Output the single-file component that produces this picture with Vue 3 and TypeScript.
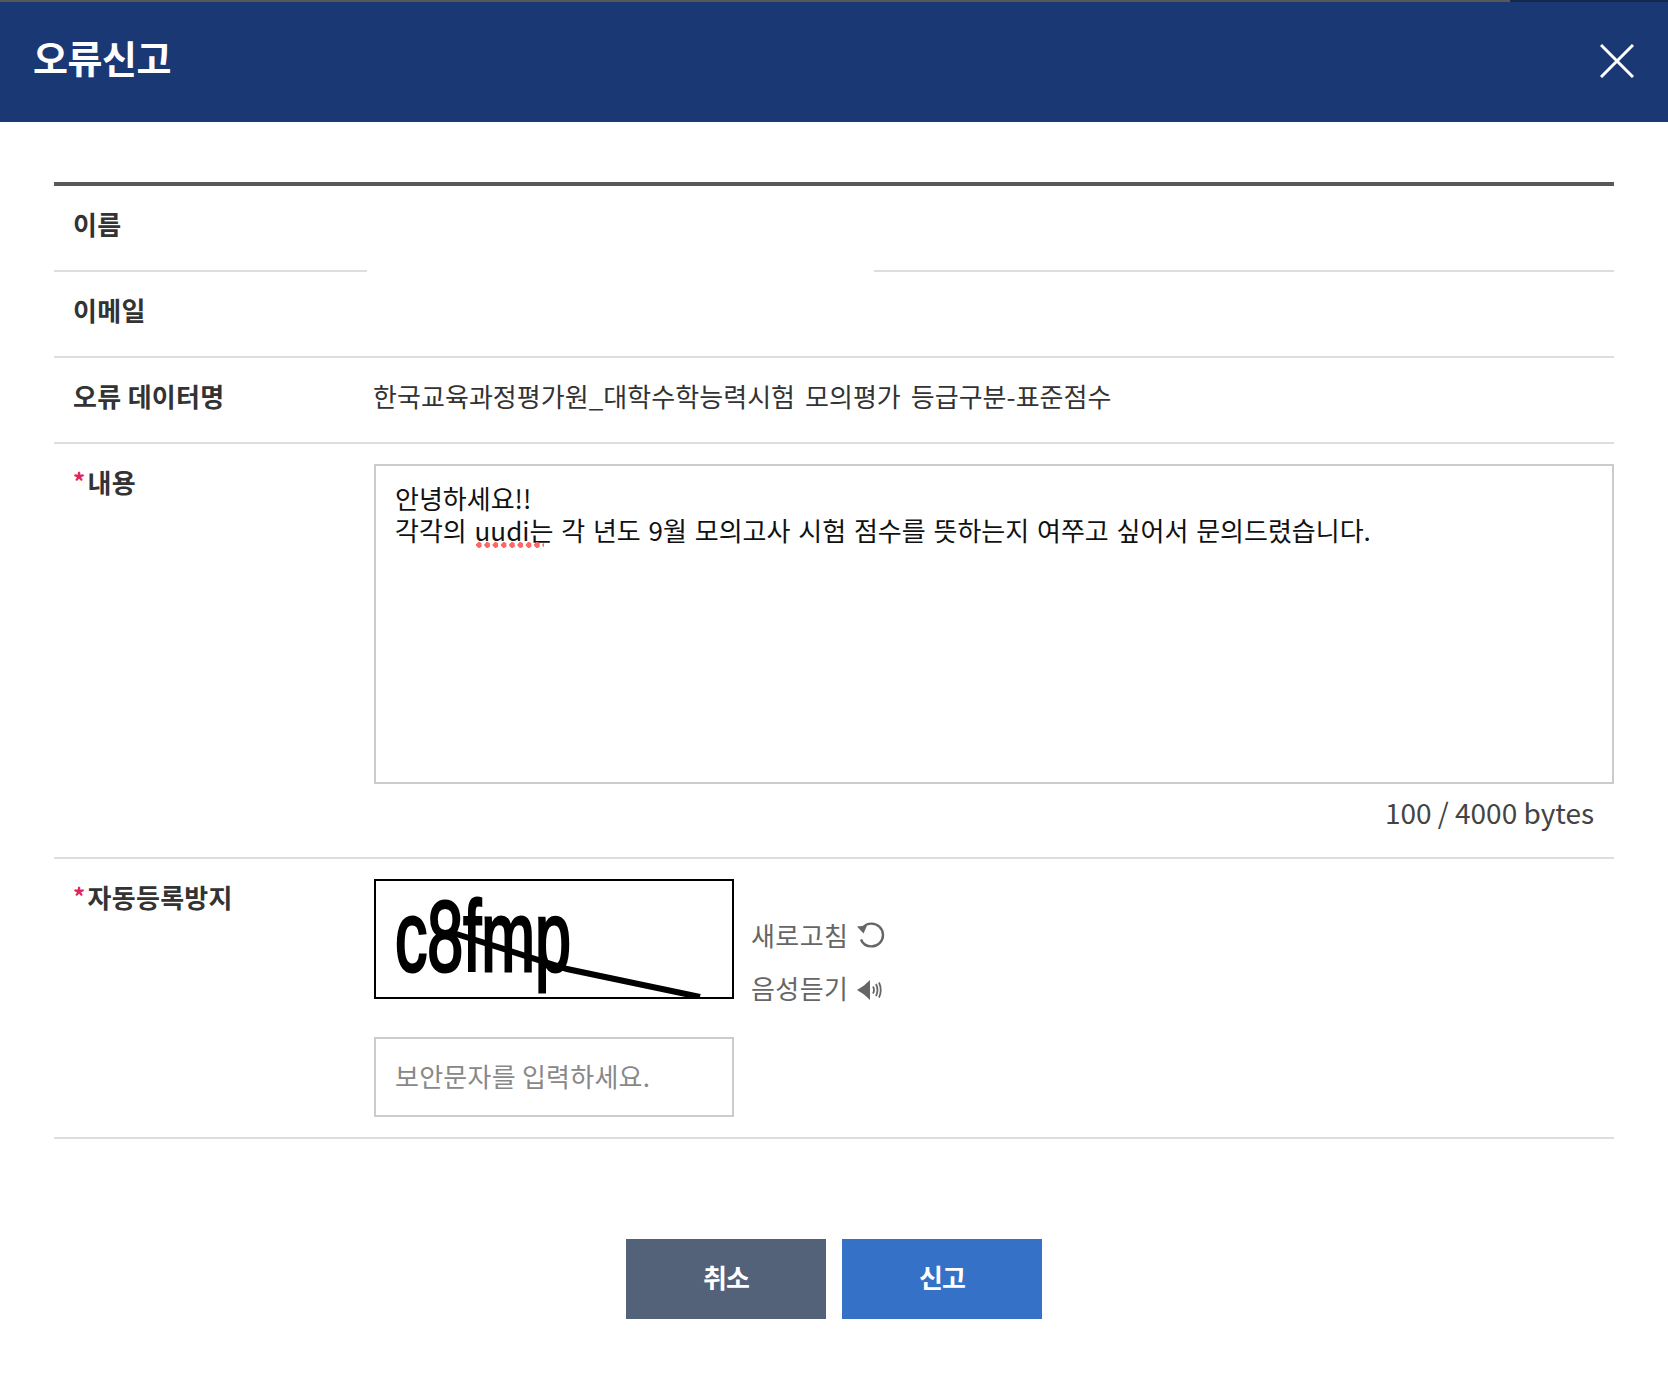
<script setup lang="ts">
const title: string = '오류신고'
const dataName: string = '한국교육과정평가원_대학수학능력시험 모의평가 등급구분-표준점수'
</script>

<template>
  <div class="page">
    <div class="strip"><div class="strip-fill"></div></div>
    <header class="head">
      <h1 class="title">{{ title }}</h1>
      <svg class="close" width="34" height="34" viewBox="0 0 34 34" aria-label="닫기">
        <path d="M1 1L33 33M33 1L1 33" stroke="#fff" stroke-width="3" fill="none" />
      </svg>
    </header>

    <main class="body">
      <section class="table">
        <div class="row row-name">
          <div class="th cell-line">이름</div>
          <div></div>
          <div class="cell-line"></div>
        </div>
        <div class="row row-line">
          <div class="th">이메일</div>
          <div></div>
        </div>
        <div class="row row-line">
          <div class="th">오류 데이터명</div>
          <div class="value">{{ dataName }}</div>
        </div>
        <div class="row row-line row-content">
          <div class="th"><span class="req">*</span>내용</div>
          <div class="td">
            <div class="area">안녕하세요!!<br />각각의 uudi는 각 년도 9월 모의고사 시험 점수를 뜻하는지 여쭈고 싶어서 문의드렸습니다.<i class="spell"></i></div>
            <div class="count">100 / 4000 bytes</div>
          </div>
        </div>
        <div class="row row-line row-captcha">
          <div class="th"><span class="req">*</span>자동등록방지</div>
          <div class="td">
            <div class="cap-top">
              <div class="cap-box">
                <svg width="356" height="116" viewBox="0 0 356 116">
                  <text x="19" y="90" class="cap-text" textLength="176" lengthAdjust="spacingAndGlyphs">c8fmp</text>
                  <path d="M74 51L191 88L324 116" stroke="#000" stroke-width="6" fill="none" />
                </svg>
              </div>
              <div class="cap-actions">
                <div class="cap-action">
                  <span>새로고침</span>
                  <svg width="30" height="26" viewBox="0 0 30 26">
                    <path d="M7 5.5C9 3 12 1.6 15.5 1.6C21.8 1.6 27 6.6 27 13C27 19.4 21.8 24.4 15.5 24.4C10.6 24.4 6.6 21.6 5 17.5" stroke="#666" stroke-width="2.4" fill="none" />
                    <path d="M1 4.5L11 3.5L7.5 11.5Z" fill="#666" />
                  </svg>
                </div>
                <div class="cap-action">
                  <span>음성듣기</span>
                  <svg class="speaker" width="26" height="22" viewBox="0 0 26 22">
                    <path d="M1 11L8 6.5L14 1V21L8 15.5Z" fill="#666" />
                    <path d="M17 7.5Q19 11 17 14.5M20 5Q23 11 20 17M23 3.5Q26.5 11 23 18.5" stroke="#666" stroke-width="1.8" fill="none" />
                  </svg>
                </div>
              </div>
            </div>
            <input class="cap-input" type="text" placeholder="보안문자를 입력하세요." />
          </div>
        </div>
      </section>

      <div class="buttons">
        <button class="btn btn-cancel" type="button">취소</button>
        <button class="btn btn-report" type="button">신고</button>
      </div>
    </main>
  </div>
</template>

<style>
html, body { margin: 0; background: #fff; }
</style>

<style scoped>
.page {
  width: 1668px;
  min-height: 1378px;
  background: #fff;
  font-family: "Noto Sans CJK KR", "Noto Sans", sans-serif;
  color: #333;
}
.strip { height: 2px; background: #15294f; }
.strip-fill { width: 1510px; height: 2px; background: #585858; }
.head {
  height: 120px;
  background: #1a3873;
  display: flex;
  align-items: center;
  justify-content: space-between;
  padding: 0 34px 0 33px;
  box-sizing: border-box;
}
.title {
  margin: 0 0 10px;
  font-size: 38px;
  font-weight: 700;
  letter-spacing: -0.5px;
  color: #fff;
  line-height: 1.2;
}
.close { display: block; margin-bottom: 2px; }
.body { padding: 60px 54px 0; }
.table { border-top: 4px solid #585858; }
.row { display: grid; grid-template-columns: 313px 1fr; }
.row-name { grid-template-columns: 313px 507px 1fr; height: 86px; }
.cell-line { border-bottom: 2px solid #ddd; }
.row-line { border-bottom: 2px solid #ddd; min-height: 84px; }
.th {
  padding: 19px 0 0 19px;
  font-size: 26px;
  font-weight: 700;
  line-height: 38px;
  letter-spacing: 0.3px;
  color: #333;
}
.value {
  padding: 19px 0 0 6px;
  font-size: 26px;
  line-height: 38px;
  letter-spacing: 0.05px;
  word-spacing: 4px;
  color: #333;
}
.td { padding-left: 7px; }
.req {
  color: #e0245e;
  margin-right: 2px;
  font-size: 24px;
  line-height: 1;
  vertical-align: 2px;
}
.row-content .td { padding-top: 20px; padding-bottom: 26px; }
.area {
  position: relative;
  box-sizing: border-box;
  height: 320px;
  border: 2px solid #ccc;
  padding: 16px 19px;
  font-size: 26px;
  line-height: 32px;
  letter-spacing: 0;
  word-spacing: 2px;
  color: #111;
}
.spell {
  position: absolute;
  left: 100px;
  top: 76px;
  width: 68px;
  height: 6px;
  background: radial-gradient(circle at 3px 3px, #f66 2.6px, transparent 3px) left top / 8.3px 6px repeat-x;
}
.count {
  text-align: right;
  padding: 9px 20px 0 0;
  font-size: 28px;
  line-height: 38px;
  color: #444;
}
.row-captcha .td { padding-top: 20px; padding-bottom: 20px; }
.cap-top { display: flex; align-items: flex-start; gap: 17px; }
.cap-box {
  box-sizing: border-box;
  width: 360px;
  height: 120px;
  border: 2px solid #000;
  background: #fff;
  overflow: hidden;
}
.cap-box svg { display: block; }
.cap-text {
  font-family: "Liberation Sans", sans-serif;
  font-size: 100px;
  font-weight: 400;
  fill: #000;
  stroke: #000;
  stroke-width: 3px;
}
.cap-actions { display: flex; flex-direction: column; gap: 15px; height: 120px; box-sizing: border-box; padding-top: 37px; }
.cap-action {
  display: flex;
  align-items: center;
  gap: 8px;
  font-size: 26px;
  line-height: 38px;
  letter-spacing: 0.4px;
  color: #666;
}
.speaker { margin-top: 4px; }
.cap-input {
  display: block;
  box-sizing: border-box;
  width: 360px;
  height: 80px;
  margin-top: 38px;
  border: 2px solid #ccc;
  padding: 0 0 4px 19px;
  font-family: inherit;
  font-size: 26px;
  letter-spacing: 0.25px;
  outline: none;
}
.cap-input::placeholder { color: #888; opacity: 1; }
.buttons { display: flex; justify-content: center; gap: 16px; margin-top: 100px; }
.btn {
  width: 200px;
  height: 80px;
  border: 0;
  padding: 0 0 5px;
  font-family: inherit;
  font-size: 26px;
  font-weight: 700;
  letter-spacing: -0.8px;
  color: #fff;
}
.btn-cancel { background: #536179; }
.btn-report { background: #3571c6; }
</style>
